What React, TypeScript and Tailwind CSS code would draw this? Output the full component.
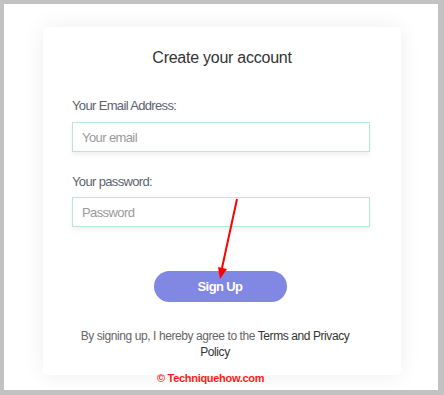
const App = () => {
  return (
    <div
      className="relative h-[395px] w-[444px] overflow-hidden bg-[#c2c2c2] pt-[4px] pl-[4px]"
      style={{ fontFamily: '"Liberation Sans", Arial, sans-serif' }}
    >
      <div className="h-[386px] w-[434px] bg-white pt-[23px] pl-[39px]">
        {/* Card */}
        <div className="flex h-[348px] w-[358px] flex-col rounded-[4px] bg-white px-[29px] pt-[21px] shadow-[0_0_22px_rgba(0,0,0,0.07)]">
          <h1 className="text-center text-[16px] leading-[20px] tracking-[-0.25px] text-[#333]">
            Create your account
          </h1>

          <label className="mt-[30px] text-[13px] leading-[16px] tracking-[-0.65px] text-[#5c6270]">
            Your Email Address:
          </label>
          <input
            placeholder="Your email"
            className="mt-[8px] h-[30px] w-[298px] border border-[#b6e8d9] px-[9px] text-[13px] tracking-[-0.6px] text-[#333] shadow-[0_3px_4px_rgba(0,0,0,0.06)] outline-none placeholder:text-[#999]"
          />

          <label className="mt-[22px] text-[13px] leading-[16px] tracking-[-0.65px] text-[#5c6270]">
            Your password:
          </label>
          <input
            type="password"
            placeholder="Password"
            className="mt-[7px] h-[30px] w-[298px] border border-[#b6e8d9] px-[9px] text-[13px] tracking-[-0.6px] text-[#333] shadow-[0_3px_4px_rgba(0,0,0,0.06)] outline-none placeholder:text-[#999]"
          />

          <div className="mt-[44px] flex justify-center">
            <button className="ml-[-4px] h-[31px] w-[133px] rounded-full bg-[#8088e3] text-[13px] font-bold tracking-[-0.6px] text-white">
              Sign Up
            </button>
          </div>

          <p className="mt-[26px] ml-[7px] w-[272px] text-center text-[12px] leading-[16px] tracking-[-0.42px] text-[#666]">
            By signing up, I hereby agree to the{" "}
            <span className="text-[#333]">Terms and Privacy Policy</span>
          </p>
        </div>
      </div>

      {/* Watermark */}
      <div className="absolute top-[370px] left-[157px] text-[11px] leading-[16px] font-bold tracking-[-0.3px] text-[#ff1a1a]">
        © Techniquehow.com
      </div>

      {/* Red arrow annotation */}
      <svg className="absolute top-0 left-0" width="444" height="395">
        <line x1="237" y1="199" x2="222" y2="268" stroke="#f00" strokeWidth="2" />
        <polygon points="218,267 227,269 220,279" fill="#f00" />
      </svg>
    </div>
  );
};

export default App;
